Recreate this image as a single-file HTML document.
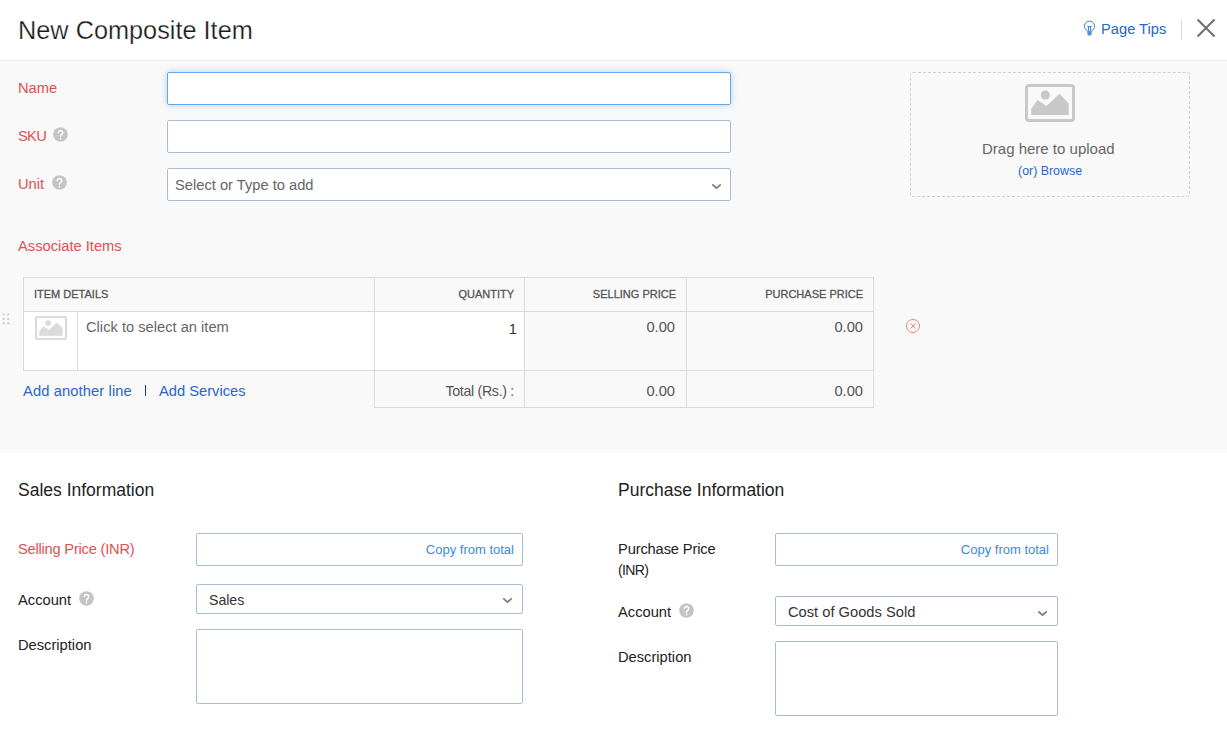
<!DOCTYPE html>
<html><head><meta charset="utf-8"><title>New Composite Item</title>
<style>
html,body{margin:0;padding:0;width:1227px;height:729px;overflow:hidden;background:#fff;font-family:"Liberation Sans",sans-serif}
.t{position:absolute;line-height:1;white-space:nowrap;font-family:"Liberation Sans",sans-serif}
</style></head><body>
<div style="position:absolute;left:0px;top:0px;width:1227px;height:61px;box-sizing:border-box;background:#fff;border-bottom:1px solid #eaeaea"></div>
<div style="position:absolute;left:0px;top:61px;width:1227px;height:392px;box-sizing:border-box;background:#f9f9f9"></div>
<div style="position:absolute;left:0px;top:453px;width:1227px;height:276px;box-sizing:border-box;background:#fff"></div>
<div class="t" style="left:18px;top:18px;font-size:25.3px;color:#1a1a1a;-webkit-text-stroke:0.25px #fff">New Composite Item</div>
<svg style="position:absolute;left:1083px;top:20px" width="13" height="17" viewBox="0 0 13 17"><path d="M4.6 10.9A5.1 5.1 0 1 1 8.4 10.9" fill="none" stroke="#3a80d8" stroke-width="1"/><path d="M4.4 6.6h4.2M5.5 6.6v4.3M7.5 6.6v4.3" fill="none" stroke="#3a80d8" stroke-width="1"/><path d="M4.3 10.9h4.4v3.1q0 1.8-2.2 1.8q-2.2 0-2.2-1.8z" fill="#5592dc"/></svg>
<div class="t" style="left:1101px;top:22px;font-size:14.7px;color:#2766cf;">Page Tips</div>
<div style="position:absolute;left:1181px;top:19px;width:1px;height:21px;box-sizing:border-box;background:#d9d9d9"></div>
<svg style="position:absolute;left:1196px;top:18px" width="20" height="20" viewBox="0 0 20 20"><path d="M1.5 1.5L18.5 18.5M18.5 1.5L1.5 18.5" stroke="#6f6f6f" stroke-width="2"/></svg>
<div class="t" style="left:18px;top:81px;font-size:14.7px;color:#df5052;">Name</div>
<div class="t" style="left:18px;top:129px;font-size:14.7px;color:#df5052;letter-spacing:-0.7px">SKU</div>
<div class="t" style="left:18px;top:177px;font-size:14.7px;color:#df5052;">Unit</div>
<svg style="position:absolute;left:53px;top:127px" width="15" height="15" viewBox="0 0 15 15"><circle cx="7.5" cy="7.5" r="7.3" fill="#c4c4c4"/><path d="M5.3 5.6a2.2 2.2 0 1 1 3.2 2c-.7.4-1 .7-1 1.5v.4" fill="none" stroke="#fff" stroke-width="1.5" stroke-linecap="round"/><circle cx="7.5" cy="11.6" r="0.95" fill="#fff"/></svg>
<svg style="position:absolute;left:52px;top:175px" width="15" height="15" viewBox="0 0 15 15"><circle cx="7.5" cy="7.5" r="7.3" fill="#c4c4c4"/><path d="M5.3 5.6a2.2 2.2 0 1 1 3.2 2c-.7.4-1 .7-1 1.5v.4" fill="none" stroke="#fff" stroke-width="1.5" stroke-linecap="round"/><circle cx="7.5" cy="11.6" r="0.95" fill="#fff"/></svg>
<div style="position:absolute;left:167px;top:72px;width:564px;height:33px;box-sizing:border-box;background:#fff;border:1px solid #66a9ea;border-radius:2px;box-shadow:0 0 6px rgba(102,170,234,.5)"></div>
<div style="position:absolute;left:167px;top:120px;width:564px;height:33px;box-sizing:border-box;background:#fff;border:1px solid #a9bcd6;border-radius:2px"></div>
<div style="position:absolute;left:167px;top:168px;width:564px;height:33px;box-sizing:border-box;background:#fff;border:1px solid #a9bcd6;border-radius:2px"></div>
<div class="t" style="left:175px;top:178px;font-size:14.7px;color:#666;">Select or Type to add</div>
<svg style="position:absolute;left:711px;top:183px" width="11" height="8" viewBox="0 0 11 8"><path d="M1.8 1.8L5.5 5.2L9.2 1.8" fill="none" stroke="#7a7a7a" stroke-width="1.7" stroke-linecap="round" stroke-linejoin="round"/></svg>
<div style="position:absolute;left:910px;top:72px;width:280px;height:125px;box-sizing:border-box;border:1px dashed #d0d0d0;border-radius:3px"></div>
<svg style="position:absolute;left:1025px;top:84px" width="50" height="38" viewBox="0 0 50 38"><rect x="1.5" y="1.5" width="47" height="35" rx="2.5" fill="none" stroke="#c8c8c8" stroke-width="3"/><circle cx="20.4" cy="11" r="4.5" fill="#c8c8c8"/><path d="M6.2 31V25L12.5 16L21.7 22L34.4 9.8L43.7 19.4V31z" fill="#c8c8c8"/></svg>
<div class="t" style="left:982px;top:141px;font-size:15px;color:#666;">Drag here to upload</div>
<div class="t" style="left:1018px;top:165px;font-size:12.4px;color:#2766cf;">(or) Browse</div>
<div class="t" style="left:18px;top:239px;font-size:14.7px;color:#df5052;">Associate Items</div>
<div style="position:absolute;left:23px;top:277px;width:851px;height:35px;box-sizing:border-box;border:1px solid #dadada"></div>
<div style="position:absolute;left:23px;top:311px;width:352px;height:60px;box-sizing:border-box;background:#fff;border:1px solid #dadada"></div>
<div style="position:absolute;left:374px;top:311px;width:151px;height:60px;box-sizing:border-box;background:#fff;border:1px solid #dadada"></div>
<div style="position:absolute;left:524px;top:311px;width:163px;height:60px;box-sizing:border-box;border:1px solid #dadada"></div>
<div style="position:absolute;left:686px;top:311px;width:188px;height:60px;box-sizing:border-box;border:1px solid #dadada"></div>
<div style="position:absolute;left:374px;top:277px;width:1px;height:35px;box-sizing:border-box;background:#dadada"></div>
<div style="position:absolute;left:524px;top:277px;width:1px;height:35px;box-sizing:border-box;background:#dadada"></div>
<div style="position:absolute;left:686px;top:277px;width:1px;height:35px;box-sizing:border-box;background:#dadada"></div>
<div style="position:absolute;left:77px;top:311px;width:1px;height:60px;box-sizing:border-box;background:#dadada"></div>
<div style="position:absolute;left:374px;top:370px;width:151px;height:38px;box-sizing:border-box;border:1px solid #dadada"></div>
<div style="position:absolute;left:524px;top:370px;width:163px;height:38px;box-sizing:border-box;border:1px solid #dadada"></div>
<div style="position:absolute;left:686px;top:370px;width:188px;height:38px;box-sizing:border-box;border:1px solid #dadada"></div>
<div class="t" style="left:34px;top:288.5px;font-size:11px;color:#555;-webkit-text-stroke:0.3px #555;-webkit-font-smoothing:antialiased">ITEM DETAILS</div>
<div class="t" style="right:713px;top:288.5px;font-size:11px;color:#555;-webkit-text-stroke:0.3px #555;-webkit-font-smoothing:antialiased">QUANTITY</div>
<div class="t" style="right:551px;top:288.5px;font-size:11px;color:#555;-webkit-text-stroke:0.3px #555;-webkit-font-smoothing:antialiased">SELLING PRICE</div>
<div class="t" style="right:364px;top:288.5px;font-size:11px;color:#555;-webkit-text-stroke:0.3px #555;-webkit-font-smoothing:antialiased">PURCHASE PRICE</div>
<svg style="position:absolute;left:35px;top:316px" width="32" height="24" viewBox="0 0 32 24"><rect x="1" y="1" width="30" height="22" rx="1.5" fill="none" stroke="#dadada" stroke-width="2"/><circle cx="13" cy="7" r="2.8" fill="#dadada"/><path d="M4.2 19.7V15.7L8.2 10.3L13.9 14L22 6.5L27.7 12.2V19.7z" fill="#dadada"/></svg>
<div class="t" style="left:86px;top:320px;font-size:14.7px;color:#666;">Click to select an item</div>
<div class="t" style="right:710px;top:322px;font-size:14.7px;color:#333;">1</div>
<div class="t" style="right:552px;top:320px;font-size:14.7px;color:#555;">0.00</div>
<div class="t" style="right:364px;top:320px;font-size:14.7px;color:#555;">0.00</div>
<div class="t" style="right:713px;top:384px;font-size:14.2px;color:#555;letter-spacing:-0.3px">Total (Rs.) :</div>
<div class="t" style="right:552px;top:384px;font-size:14.7px;color:#555;">0.00</div>
<div class="t" style="right:364px;top:384px;font-size:14.7px;color:#555;">0.00</div>
<div class="t" style="left:23px;top:384px;font-size:14.7px;color:#2766cf;letter-spacing:0.12px">Add another line</div>
<div style="position:absolute;left:145px;top:385px;width:1px;height:11px;box-sizing:border-box;background:#23399a"></div>
<div class="t" style="left:159px;top:384px;font-size:14.7px;color:#2766cf;">Add Services</div>
<svg style="position:absolute;left:905px;top:318px" width="16" height="16" viewBox="0 0 16 16"><circle cx="8" cy="8" r="6.5" fill="none" stroke="#e8857a" stroke-width="1"/><path d="M5.5 5.5l5 5M10.5 5.5l-5 5" stroke="#e8857a" stroke-width="1"/></svg>
<svg style="position:absolute;left:2px;top:312px" width="9" height="14" viewBox="0 0 9 14"><circle cx="1.6" cy="2.4" r="1.2" fill="#d2d2d2"/><circle cx="1.6" cy="6.9" r="1.2" fill="#d2d2d2"/><circle cx="1.6" cy="11.3" r="1.2" fill="#d2d2d2"/><circle cx="6.2" cy="2.4" r="1.2" fill="#d2d2d2"/><circle cx="6.2" cy="6.9" r="1.2" fill="#d2d2d2"/><circle cx="6.2" cy="11.3" r="1.2" fill="#d2d2d2"/></svg>
<div class="t" style="left:18px;top:482px;font-size:17.5px;color:#222;">Sales Information</div>
<div class="t" style="left:618px;top:482px;font-size:17.5px;color:#222;">Purchase Information</div>
<div class="t" style="left:18px;top:542px;font-size:14.7px;color:#df5052;letter-spacing:-0.23px">Selling Price (INR)</div>
<div style="position:absolute;left:196px;top:533px;width:327px;height:33px;box-sizing:border-box;background:#fff;border:1px solid #a9bcd6;border-radius:2px"></div>
<div class="t" style="right:713px;top:543px;font-size:13px;color:#3a8ae0;">Copy from total</div>
<div class="t" style="left:18px;top:593px;font-size:14.7px;color:#222;">Account</div>
<svg style="position:absolute;left:79px;top:591px" width="15" height="15" viewBox="0 0 15 15"><circle cx="7.5" cy="7.5" r="7.3" fill="#c4c4c4"/><path d="M5.3 5.6a2.2 2.2 0 1 1 3.2 2c-.7.4-1 .7-1 1.5v.4" fill="none" stroke="#fff" stroke-width="1.5" stroke-linecap="round"/><circle cx="7.5" cy="11.6" r="0.95" fill="#fff"/></svg>
<div style="position:absolute;left:196px;top:584px;width:327px;height:30px;box-sizing:border-box;background:#fff;border:1px solid #a9bcd6;border-radius:2px"></div>
<div class="t" style="left:209px;top:592.95px;font-size:14.1px;color:#333;">Sales</div>
<svg style="position:absolute;left:502px;top:597px" width="11" height="8" viewBox="0 0 11 8"><path d="M1.8 1.8L5.5 5.2L9.2 1.8" fill="none" stroke="#7a7a7a" stroke-width="1.7" stroke-linecap="round" stroke-linejoin="round"/></svg>
<div class="t" style="left:18px;top:638px;font-size:14.7px;color:#222;">Description</div>
<div style="position:absolute;left:196px;top:629px;width:327px;height:75px;box-sizing:border-box;background:#fff;border:1px solid #a9bcd6;border-radius:2px"></div>
<div class="t" style="left:618px;top:542px;font-size:14.7px;color:#222;letter-spacing:-0.15px">Purchase Price</div>
<div class="t" style="left:618px;top:563px;font-size:14px;color:#222;letter-spacing:-0.6px">(INR)</div>
<div style="position:absolute;left:775px;top:533px;width:283px;height:33px;box-sizing:border-box;background:#fff;border:1px solid #a9bcd6;border-radius:2px"></div>
<div class="t" style="right:178px;top:543px;font-size:13px;color:#3a8ae0;">Copy from total</div>
<div class="t" style="left:618px;top:605px;font-size:14.7px;color:#222;">Account</div>
<svg style="position:absolute;left:679px;top:603px" width="15" height="15" viewBox="0 0 15 15"><circle cx="7.5" cy="7.5" r="7.3" fill="#c4c4c4"/><path d="M5.3 5.6a2.2 2.2 0 1 1 3.2 2c-.7.4-1 .7-1 1.5v.4" fill="none" stroke="#fff" stroke-width="1.5" stroke-linecap="round"/><circle cx="7.5" cy="11.6" r="0.95" fill="#fff"/></svg>
<div style="position:absolute;left:775px;top:596px;width:283px;height:30px;box-sizing:border-box;background:#fff;border:1px solid #a9bcd6;border-radius:2px"></div>
<div class="t" style="left:788px;top:605px;font-size:14.7px;color:#333;">Cost of Goods Sold</div>
<svg style="position:absolute;left:1037px;top:610px" width="11" height="8" viewBox="0 0 11 8"><path d="M1.8 1.8L5.5 5.2L9.2 1.8" fill="none" stroke="#7a7a7a" stroke-width="1.7" stroke-linecap="round" stroke-linejoin="round"/></svg>
<div class="t" style="left:618px;top:650px;font-size:14.7px;color:#222;">Description</div>
<div style="position:absolute;left:775px;top:641px;width:283px;height:75px;box-sizing:border-box;background:#fff;border:1px solid #a9bcd6;border-radius:2px"></div>
</body></html>
